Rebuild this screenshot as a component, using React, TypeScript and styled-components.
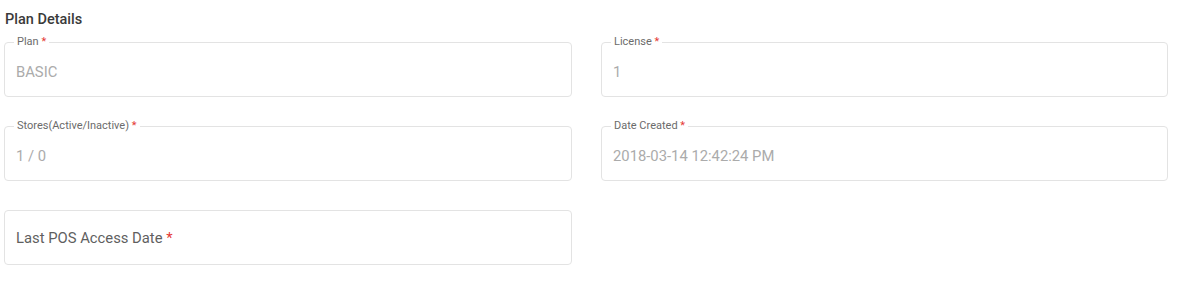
import React from "react";
import styled, { createGlobalStyle } from "styled-components";

const GlobalStyle = createGlobalStyle`
  body {
    margin: 0;
    background: #ffffff;
    font-family: Roboto, "Liberation Sans", Arial, sans-serif;
  }
`;

const fields = [
  { label: "Plan", value: "BASIC" },
  { label: "License", value: "1" },
  { label: "Stores(Active/Inactive)", value: "1 / 0" },
  { label: "Date Created", value: "2018-03-14 12:42:24 PM" },
];

const App = () => {
  return (
    <>
      <GlobalStyle />
      <Section>
        <Title>Plan Details</Title>
        <Grid>
          {fields.map((f) => (
            <Field key={f.label}>
              <Legend>
                {f.label} <Star>*</Star>
              </Legend>
              <Value>{f.value}</Value>
            </Field>
          ))}
          <Field>
            <Placeholder>
              Last POS Access Date <Star>*</Star>
            </Placeholder>
          </Field>
        </Grid>
      </Section>
    </>
  );
};

export default App;

const Section = styled.div`
  padding: 10px 0 0 4px;
  width: 1165px;
`;

const Title = styled.h3`
  margin: 0 0 12px 1px;
  font-size: 14.5px;
  line-height: 20px;
  font-weight: 500;
  color: #3a3a3a;
`;

const Grid = styled.div`
  display: grid;
  grid-template-columns: 568px 567px;
  column-gap: 29px;
  row-gap: 29px;
`;

const Field = styled.div`
  position: relative;
  box-sizing: border-box;
  height: 55px;
  border: 1px solid #e3e3e3;
  border-radius: 4px;
  display: flex;
  align-items: center;
  padding: 0 11px;
`;

const Legend = styled.span`
  position: absolute;
  top: -7px;
  left: 9px;
  padding: 0 3px;
  background: #ffffff;
  font-size: 11px;
  line-height: 12px;
  color: #6b6b6b;
`;

const Star = styled.span`
  color: #e53935;
`;

const Value = styled.div`
  padding-top: 5px;
  font-size: 14.8px;
  color: #ababab;
`;

const Placeholder = styled.div`
  font-size: 14.8px;
  color: #5f5f5f;
`;
